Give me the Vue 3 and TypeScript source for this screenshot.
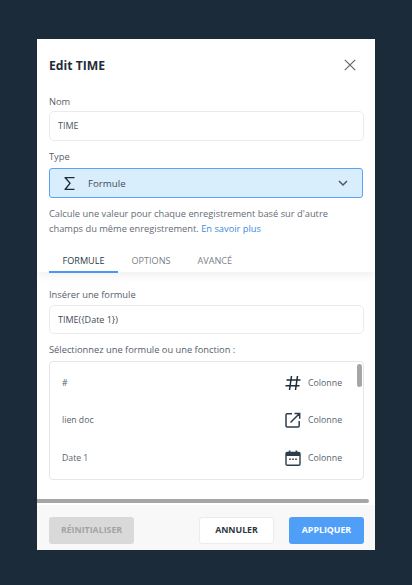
<script setup lang="ts">
const tabs = ['FORMULE', 'OPTIONS', 'AVANCÉ']
const rows = [
  { id: 'hash', name: '#' },
  { id: 'link', name: 'lien doc' },
  { id: 'date', name: 'Date 1' },
]
</script>

<template>
  <div class="page">
    <div class="modal">
      <div class="top">
        <div class="head">
          <span class="title">Edit TIME</span>
          <svg class="close" width="12" height="12" viewBox="0 0 12 12">
            <path d="M.8.8l10.400 10.400M11.200.8L.8 11.200" fill="none" stroke="#5f6670" stroke-width="1.200" />
          </svg>
        </div>
        <label class="lb first">Nom</label>
        <div class="input">TIME</div>
        <label class="lb second">Type</label>
        <div class="select">
          <svg class="sigma" width="11" height="13" viewBox="0 0 11 13">
            <path d="M10.500 0H.5v1L5.200 6.300.5 12v1h10v-1.300H2.600l4.300-5.400L2.700 1.300h7.800z" fill="#1c2b39" />
          </svg>
          <span class="sel-text">Formule</span>
          <svg class="chev" width="10" height="7" viewBox="0 0 10 7">
            <path d="M1 1l4 4 4-4" fill="none" stroke="#4d5560" stroke-width="1.500" />
          </svg>
        </div>
        <p class="desc">
          Calcule une valeur pour chaque enregistrement basé sur d'autre champs du même enregistrement.
          <a class="more">En savoir plus</a>
        </p>
        <div class="tabs">
          <span v-for="(t, i) in tabs" :key="t" class="tab" :class="{ active: i === 0 }">{{ t }}</span>
        </div>
      </div>
      <div class="body">
        <label class="lb">Insérer une formule</label>
        <div class="input formula">TIME({Date 1})</div>
        <label class="lb third">Sélectionnez une formule ou une fonction :</label>
        <div class="list">
          <div v-for="r in rows" :key="r.id" class="row">
            <span class="name">{{ r.name }}</span>
            <svg v-if="r.id === 'hash'" class="ico" width="16" height="16" viewBox="0 0 16 16">
              <path d="M6.500 1L4.500 15M12.500 1L10.500 15M1.500 5H15.500M.5 10.800H14.500" fill="none" stroke="#1c2b39" stroke-width="1.500" />
            </svg>
            <svg v-else-if="r.id === 'link'" class="ico" width="16" height="16" viewBox="0 0 16 16">
              <path d="M7 1.800H2.200C1.500 1.800 1 2.300 1 3V13.800C1 14.500 1.500 15 2.200 15H13C13.700 15 14.200 14.500 14.200 13.800V9M5.500 10.500L14 2M9.500 1.500H14.700V6.700" fill="none" stroke="#2f3d4a" stroke-width="1.500" />
            </svg>
            <svg v-else class="ico" width="16" height="16" viewBox="0 0 16 16">
              <path d="M2.200 2.500H13.800C14.500 2.500 15 3 15 3.700V14C15 14.700 14.500 15.200 13.800 15.200H2.200C1.500 15.200 1 14.700 1 14V3.700C1 3 1.500 2.500 2.200 2.500Z" fill="none" stroke="#2f3d4a" stroke-width="1.400" />
              <path d="M1 2.500H15V6H1zM3.800.5h1.600v3H3.800zM10.600.5h1.600v3h-1.600zM4.200 8.400h1.600V10H4.200zM7.200 8.400h1.600V10H7.200zM10.200 8.400h1.600V10h-1.600z" fill="#2f3d4a" />
            </svg>
            <span class="kind">Colonne</span>
          </div>
          <div class="thumb"></div>
        </div>
        <div class="hbar"></div>
      </div>
      <div class="foot">
        <button class="btn reset">RÉINITIALISER</button>
        <button class="btn cancel">ANNULER</button>
        <button class="btn apply">APPLIQUER</button>
      </div>
    </div>
  </div>
</template>

<style>
html, body {
  margin: 0;
  background: #1c2b39;
}
</style>

<style scoped>
.page {
  width: 412px;
  height: 585px;
  padding: 39px 37px 35px;
  box-sizing: border-box;
  background: #1c2b39;
  font-family: "Open Sans", "Noto Sans", sans-serif;
  color: #4d5560;
}
.modal {
  width: 338px;
  height: 511px;
  background: #fff;
  display: flex;
  flex-direction: column;
  overflow: hidden;
}
.top {
  padding: 0 12px;
  height: 233px;
  box-sizing: border-box;
  position: relative;
  z-index: 1;
  box-shadow: 0 4px 8px rgba(0, 0, 0, 0.06);
}
.head {
  display: flex;
  justify-content: space-between;
  align-items: center;
  height: 18px;
  padding-top: 17px;
}
.title {
  font-size: 12.200px;
  font-weight: 700;
  color: #1f2d3a;
}
.close {
  margin-right: 7px;
}
.lb {
  display: block;
  font-size: 9.300px;
  line-height: 14px;
  color: #55606a;
}
.first {
  margin-top: 21px;
  margin-bottom: 2px;
}
.second {
  margin-top: 9px;
  margin-bottom: 4px;
}
.input {
  height: 30px;
  box-sizing: border-box;
  border: 1px solid #ebebeb;
  border-radius: 5px;
  padding-left: 8px;
  font-size: 9px;
  line-height: 28px;
  color: #4d5560;
  width: 315px;
}
.select {
  width: 314px;
  height: 30px;
  box-sizing: border-box;
  border: 1px solid #5aa2f2;
  border-radius: 3px;
  background: #d8eefd;
  display: flex;
  align-items: center;
  padding-left: 14px;
}
.sel-text {
  font-size: 9.700px;
  margin-left: 13px;
  color: #3f4a55;
}
.chev {
  margin-left: auto;
  margin-right: 14px;
}
.desc {
  margin: 9px 0 0;
  font-size: 9.300px;
  line-height: 14.500px;
  color: #646c75;
  width: 300px;
}
.more {
  color: #3d8bdc;
}
.tabs {
  display: flex;
  margin-top: 10px;
  height: 27px;
}
.tab {
  font-size: 9.100px;
  font-weight: 500;
  color: #7a8087;
  line-height: 29px;
  padding: 0 13.500px;
  height: 27px;
  box-sizing: border-box;
}
.tab.active {
  color: #2c3945;
  border-bottom: 2px solid #4a98f5;
}
.body {
  flex: 1;
  padding: 16px 12px 0;
  position: relative;
}
.formula {
  margin-top: 3px;
  height: 29px;
  color: #3f4a55;
}
.third {
  margin-top: 9px;
  margin-bottom: 4px;
}
.list {
  width: 315px;
  height: 119px;
  box-sizing: border-box;
  border: 1px solid #e6e6e6;
  border-radius: 4px;
  position: relative;
  padding: 2px 0 0 12px;
}
.row {
  display: flex;
  align-items: center;
  height: 37.600px;
}
.name {
  flex: 1;
  font-size: 8.700px;
  color: #5a626b;
}
.ico {
  margin-right: 7px;
}
.kind {
  font-size: 8.800px;
  color: #5a626b;
  width: 55px;
}
.thumb {
  position: absolute;
  top: 2px;
  right: 1px;
  width: 5px;
  height: 23px;
  border-radius: 3px;
  background: #a6a6a6;
}
.hbar {
  position: absolute;
  left: 0;
  bottom: 2px;
  width: 332px;
  height: 4px;
  border-radius: 0 2px 2px 0;
  background: #a6a6a6;
}
.foot {
  height: 45px;
  box-sizing: border-box;
  background: #f8f8f8;
  display: flex;
  align-items: center;
  padding: 5px 11px 0 12px;
}
.btn {
  height: 27px;
  box-sizing: border-box;
  border-radius: 3px;
  border: 1px solid transparent;
  font-family: inherit;
  font-size: 8.800px;
  font-weight: 700;
  padding: 0;
}
.reset {
  width: 85px;
  background: #d9d9d9;
  color: #a3a3a3;
}
.cancel {
  width: 75px;
  margin-left: auto;
  background: #fff;
  border-color: #ececec;
  color: #2c3945;
}
.apply {
  width: 75px;
  margin-left: 15px;
  background: #4f9ff8;
  color: #fff;
}
</style>
